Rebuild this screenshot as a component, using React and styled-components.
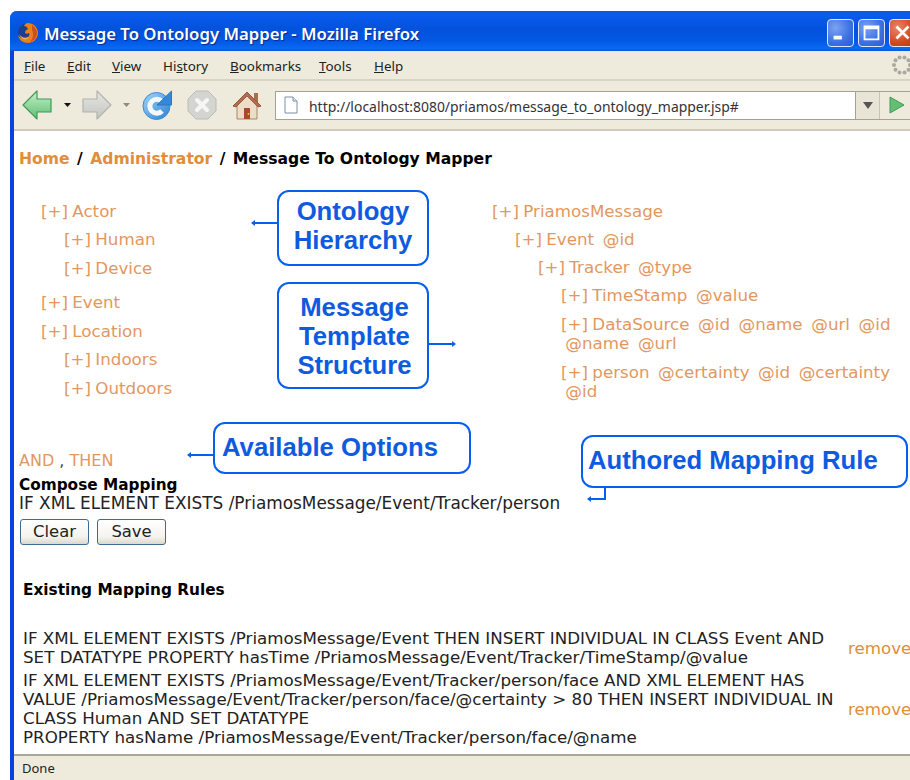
import React from "react";
import styled, { createGlobalStyle } from "styled-components";

const Global = createGlobalStyle`
  html, body { margin: 0; padding: 0; background: #fff; overflow: hidden; }
  #root { width: 910px; height: 780px; overflow: hidden; }
`;

const pageFont = `"DejaVu Sans", Verdana, sans-serif`;
const uiFont = `"Noto Sans", Tahoma, sans-serif`;

const Desktop = styled.div`
  width: 910px;
  height: 780px;
  padding: 11px 0 0 10px;
  box-sizing: border-box;
  overflow: hidden;
`;

const Win = styled.div`
  width: 904px;
  height: 769px;
  display: flex;
  flex-direction: column;
  border-left: 4px solid #0a42e0;
  border-top-left-radius: 7px;
  background: #fff;
  box-sizing: border-box;
  position: relative;
`;

const TitleBar = styled.div`
  height: 40px;
  margin-left: -4px;
  flex: none;
  display: flex;
  align-items: center;
  padding: 3px 0 0 7px;
  box-sizing: border-box;
  gap: 5px;
  border-top-left-radius: 7px;
  background: linear-gradient(180deg, #0a58e0 0%, #0a5cf0 8%, #0352dc 45%, #0358e4 75%, #0a6af4 95%, #0a50d8 100%);
`;

const TitleText = styled.span`
  flex: 1;
  padding-top: 4px;
  font: 600 16.75px/1 ${uiFont};
  color: #fff;
  text-shadow: 1px 1px 1px #0a2a90;
  white-space: nowrap;
`;

const WinButtons = styled.div`
  display: flex;
  gap: 4px;
  margin-right: -2px;
`;

const WinButton = styled.div`
  width: 27px;
  height: 28px;
  border: 1px solid #dfe8fb;
  border-radius: 4px;
  box-sizing: border-box;
  background: ${(p) =>
    p.$close
      ? "radial-gradient(circle at 30% 30%, #e8866a, #d2481f 60%, #bb3612)"
      : "radial-gradient(circle at 30% 30%, #7ba3f2, #3a70e4 60%, #2a5cd2)"};
  display: flex;
  align-items: center;
  justify-content: center;
  flex: none;
`;

const MenuBar = styled.div`
  height: 30px;
  flex: none;
  display: flex;
  align-items: center;
  padding: 4px 0 0 10px;
  background: #eeebdd;
  border-bottom: 2px solid #d8d4c4;
  box-sizing: border-box;
  position: relative;
  font: 13.4px/1 ${uiFont};
  color: #222;
`;

const MenuItem = styled.span`
  width: ${(p) => p.$w}px;
  flex: none;
  white-space: nowrap;
`;

const Throbber = styled.svg`
  position: absolute;
  right: 2px;
  top: 4px;
`;

const Toolbar = styled.div`
  height: 50px;
  flex: none;
  display: flex;
  align-items: center;
  padding-left: 8px;
  background: #eeebdd;
  border-bottom: 2px solid #cfcbbb;
  box-sizing: border-box;
`;

const ToolIcon = styled.svg`
  flex: none;
  margin-left: ${(p) => p.$before || 0}px;
  margin-right: ${(p) => p.$gap || 0}px;
`;

const UrlBar = styled.div`
  flex: none;
  width: 645px;
  height: 29px;
  display: flex;
  align-items: stretch;
  border: 1px solid #a5a195;
  box-sizing: border-box;
  background: #fff;
  margin-left: 13px;
`;

const UrlField = styled.div`
  flex: 1;
  display: flex;
  align-items: center;
  gap: 10px;
  padding-left: 7px;
  font: 13.95px/1 ${uiFont};
  color: #333;
  white-space: nowrap;
  overflow: hidden;
`;

const UrlText = styled.span`
  padding-top: 3px;
`;

const UrlDrop = styled.div`
  width: 23px;
  flex: none;
  display: flex;
  align-items: center;
  justify-content: center;
  background: #e8e5d6;
  border-left: 1px solid #a5a195;
`;

const UrlGo = styled.div`
  width: 40px;
  flex: none;
  display: flex;
  align-items: center;
  padding-left: 9px;
  box-sizing: border-box;
  background: #eeebdd;
  border-left: 1px solid #c8c4b4;
`;

const Content = styled.main`
  flex: 1;
  position: relative;
  padding: 0 0 0 5px;
  font: 16.7px/19px ${pageFont};
  color: #222;
  overflow: hidden;
`;

const Crumbs = styled.div`
  margin-top: 18px;
  height: 20px;
  font: bold 15.6px/20px ${pageFont};
  color: #000;
  white-space: nowrap;
`;

const Trail = styled.span`
  color: #e08e3c;
`;

const Sep = styled.span`
  margin: 0 2px;
`;

const Trees = styled.div`
  display: grid;
  grid-template-columns: 451px 1fr;
  margin-top: 33px;
  height: 228px;
  word-spacing: -1px;
`;

const TreeList = styled.div`
  padding-left: ${(p) => p.$indent}px;
`;

const Node = styled.div`
  color: #e3975e;
  margin-top: ${(p) => p.$top || 0}px;
  padding-left: ${(p) => p.$depth * 23 || 0}px;
  white-space: pre-wrap;
`;

const Options = styled.div`
  margin-top: 21px;
  color: #444;
  height: 25px;
  font-size: 16px;
`;

const Opt = styled.span`
  color: #e3975e;
`;

const Heading = styled.div`
  font-weight: bold;
  font-size: 15.3px;
  line-height: 18px;
  color: #000;
  margin-left: ${(p) => p.$left || 0}px;
`;

const Draft = styled.div`
  font-size: 16.9px;
`;

const Buttons = styled.div`
  display: flex;
  gap: 8px;
  margin-top: 6px;
  margin-left: 1px;
`;

const Btn = styled.button`
  height: 26px;
  width: ${(p) => p.$w}px;
  padding: 0;
  border: 1px solid #3f6b92;
  border-radius: 3px;
  background: linear-gradient(180deg, #fff, #f4f3ee 70%, #dcd8cd);
  font: 16.4px/1 ${pageFont};
  color: #222;
`;

const RuleSection = styled.section`
  margin-top: 36px;
`;

const RuleTable = styled.div`
  margin-top: 30px;
  display: grid;
  grid-template-columns: 825px 1fr;
  row-gap: 4px;
  padding-left: 4px;
  white-space: nowrap;
`;

const Remove = styled.span`
  color: #e08e3c;
  align-self: center;
  padding-top: 1px;
`;

const StatusBar = styled.footer`
  height: 26px;
  flex: none;
  background: #eeebdd;
  border-top: 2px solid #aaa79b;
  box-sizing: border-box;
  padding-left: 8px;
  display: flex;
  align-items: center;
  font: 13px/1 ${uiFont};
  color: #222;
`;

/* Annotation balloons laid over the page */
const Callout = styled.div`
  position: absolute;
  left: ${(p) => p.$x}px;
  top: ${(p) => p.$y}px;
  width: ${(p) => p.$w}px;
  height: ${(p) => p.$h}px;
  border: 2px solid #0560ee;
  border-radius: 12px;
  box-sizing: border-box;
  background: #fff;
  display: flex;
  align-items: center;
  justify-content: ${(p) => (p.$left ? "flex-start" : "center")};
  padding-left: ${(p) => p.$left || p.$nudge || 0}px;
  padding-bottom: ${(p) => p.$lift || 0}px;
  padding-top: ${(p) => p.$drop || 0}px;
  text-align: center;
  font: bold 25.7px/29px "Liberation Sans", Arial, sans-serif;
  color: #0f5be0;
  white-space: pre-line;
`;

const Pointer = styled.svg`
  position: absolute;
  overflow: visible;
  left: ${(p) => p.$x}px;
  top: ${(p) => p.$y}px;
`;

const TREE_LEFT = [
  ["[+] Actor", 0, 0],
  ["[+] Human", 1, 9],
  ["[+] Device", 1, 10],
  ["[+] Event", 0, 15],
  ["[+] Location", 0, 10],
  ["[+] Indoors", 1, 9],
  ["[+] Outdoors", 1, 10],
];

const Firefox = () => (
  <svg width="22" height="22" viewBox="0 0 22 22">
    <circle cx="11" cy="11" r="10" fill="#1c3f8c" />
    <path d="M11 1c5 0 10 4 10 10s-5 10-10 10C6 21 2 18 1 13c2 3 5 4 8 3 3-1 4-3 3-5-1 1-3 1-4 0 0-2 1-3 3-4C10 5 9 4 7 4c1-2 2-3 4-3z" fill="#e8811c" />
    <path d="M15 3c3 2 5 5 5 8 0 4-3 8-7 9 3-3 4-8 2-12z" fill="#c9521a" />
    <path d="M2 12c2 3 6 5 10 3-2 4-8 3-10-3z" fill="#f4b24a" />
  </svg>
);

const NavArrow = styled.svg`
  flex: none;
  transform: ${(p) => (p.$flip ? "scaleX(-1)" : "none")};
`;

const ArrowIcon = ({ flip, fill, stroke, hi }) => (
  <NavArrow width="30" height="30" viewBox="0 0 30 30" $flip={flip}>
    <defs>
      <linearGradient id={`a${hi}`} x1="0" y1="0" x2="0" y2="1">
        <stop offset="0" stopColor={hi} />
        <stop offset="1" stopColor={fill} />
      </linearGradient>
    </defs>
    <path d="M1 15 15 1v8h14v13H15v7z" fill={`url(#a${hi})`} stroke={stroke} strokeWidth="1.2" strokeLinejoin="round" />
  </NavArrow>
);

const LeftTip = ({ x, y }) => (
  <Pointer $x={x} $y={y} width="27" height="8">
    <path d="M27 4H3" stroke="#0560ee" strokeWidth="2" />
    <path d="M0 4l4-3v6z" fill="#0560ee" />
  </Pointer>
);

export default function App() {
  return (
    <Desktop>
      <Global />
      <Win>
        <TitleBar>
          <Firefox />
          <TitleText>Message To Ontology Mapper - Mozilla Firefox</TitleText>
          <WinButtons>
            <WinButton>
              <svg width="27" height="27" viewBox="0 0 27 27"><rect x="6" y="17" width="9" height="4" fill="#fff" /></svg>
            </WinButton>
            <WinButton>
              <svg width="27" height="27" viewBox="0 0 27 27"><path d="M6 7h15v14H6zM6 9h15" fill="none" stroke="#fff" strokeWidth="2" /></svg>
            </WinButton>
            <WinButton $close>
              <svg width="27" height="27" viewBox="0 0 27 27"><path d="M7 7l13 13M20 7 7 20" stroke="#fff" strokeWidth="3" /></svg>
            </WinButton>
          </WinButtons>
        </TitleBar>

        <MenuBar>
          <MenuItem $w={43}><u>F</u>ile</MenuItem>
          <MenuItem $w={45}><u>E</u>dit</MenuItem>
          <MenuItem $w={51}><u>V</u>iew</MenuItem>
          <MenuItem $w={67}>Hi<u>s</u>tory</MenuItem>
          <MenuItem $w={89}><u>B</u>ookmarks</MenuItem>
          <MenuItem $w={55}><u>T</u>ools</MenuItem>
          <MenuItem $w={40}><u>H</u>elp</MenuItem>
          <Throbber width="20" height="20" viewBox="0 0 20 20">
            {Array.from({ length: 10 }).map((_, i) => {
              const a = (i / 10) * Math.PI * 2;
              return <circle key={i} cx={10 + 8 * Math.cos(a)} cy={10 + 8 * Math.sin(a)} r="2" fill="#aaa99f" />;
            })}
          </Throbber>
        </MenuBar>

        <Toolbar>
          <ArrowIcon fill="#5cbf72" hi="#c8f0cc" stroke="#3f9a58" />
          <ToolIcon width="14" height="8" viewBox="0 0 14 8" $before={9} $gap={7}>
            <path d="M3 2h7L6.500 6z" fill="#111" />
          </ToolIcon>
          <ArrowIcon flip fill="#c4c4c0" hi="#e6e6e2" stroke="#b4b4ae" />
          <ToolIcon width="14" height="8" viewBox="0 0 14 8" $before={8} $gap={8}>
            <path d="M3 2h7L6.500 6z" fill="#8a8a86" />
          </ToolIcon>
          <ToolIcon width="30" height="30" viewBox="0 0 30 30" $gap={15}>
            <defs>
              <linearGradient id="reload" x1="0" y1="0" x2="1" y2="1">
                <stop offset="0" stopColor="#a6d6f6" />
                <stop offset="1" stopColor="#2a80d4" />
              </linearGradient>
            </defs>
            <circle cx="14.500" cy="16" r="13.500" fill="url(#reload)" stroke="#3a8ad0" />
            <path d="M20 11.500A7 7 0 1 0 20 21" fill="none" stroke="#f4f8fc" strokeWidth="5" />
            <path d="M29.500 1v14H15z" fill="#3488d8" stroke="#2a78c4" strokeLinejoin="round" />
          </ToolIcon>
          <ToolIcon width="30" height="30" viewBox="0 0 30 30" $gap={15}>
            <path d="M9 1h12l8 8v12l-8 8H9l-8-8V9z" fill="#d4d4d0" stroke="#bcbcb6" />
            <path d="M10 10l10 10M20 10 10 20" stroke="#f6f6f4" strokeWidth="4" strokeLinecap="round" />
          </ToolIcon>
          <ToolIcon width="30" height="30" viewBox="0 0 30 30">
            <path d="M22 3h4v9h-4z" fill="#b06a4c" />
            <path d="M15 2 1 16h4v13h20V16h4z" fill="#ecdcc8" stroke="#a8876a" />
            <path d="M15 2 1 16l3 1L15 6l11 11 3-1z" fill="#b76b4e" stroke="#8c5038" strokeWidth=".8" />
            <path d="M12 18h6v11h-6z" fill="#a8482c" />
            <circle cx="16.500" cy="24" r="1" fill="#f0c040" />
          </ToolIcon>
          <UrlBar>
            <UrlField>
              <svg width="16" height="18" viewBox="0 0 16 18">
                <path d="M2 1h8l4 4v12H2z" fill="#fff" stroke="#7f8ea0" />
                <path d="M10 1v4h4" fill="#dfe6ee" stroke="#7f8ea0" />
              </svg>
              <UrlText>http://localhost:8080/priamos/message_to_ontology_mapper.jsp#</UrlText>
            </UrlField>
            <UrlDrop>
              <svg width="10" height="7" viewBox="0 0 10 7"><path d="M0 0h10L5 7z" fill="#555" /></svg>
            </UrlDrop>
            <UrlGo>
              <svg width="16" height="18" viewBox="0 0 16 18"><path d="M1 1l14 8-14 8z" fill="#62c070" stroke="#3f9a58" /></svg>
            </UrlGo>
          </UrlBar>
        </Toolbar>

        <Content>
          <Crumbs>
            <Trail>Home</Trail> <Sep>/</Sep> <Trail>Administrator</Trail> <Sep>/</Sep> Message To Ontology Mapper
          </Crumbs>

          <Trees>
            <TreeList $indent={22}>
              {TREE_LEFT.map(([label, depth, top]) => (
                <Node key={label} $top={top} $depth={depth}>{label}</Node>
              ))}
            </TreeList>
            <TreeList $indent={22}>
              <Node>[+] PriamosMessage</Node>
              <TreeList $indent={23}>
                <Node $top={9}>[+] Event  @id</Node>
                <TreeList $indent={23}>
                  <Node $top={9}>[+] Tracker  @type</Node>
                  <TreeList $indent={23}>
                    <Node $top={9}>[+] TimeStamp  @value</Node>
                    <Node $top={10}>[+] DataSource  @id  @name  @url  @id<br /> @name  @url</Node>
                    <Node $top={10}>[+] person  @certainty  @id  @certainty<br /> @id</Node>
                  </TreeList>
                </TreeList>
              </TreeList>
            </TreeList>
          </Trees>

          <Options><Opt>AND</Opt> , <Opt>THEN</Opt></Options>
          <Heading>Compose Mapping</Heading>
          <Draft>IF XML ELEMENT EXISTS /PriamosMessage/Event/Tracker/person</Draft>
          <Buttons>
            <Btn $w={69}>Clear</Btn>
            <Btn $w={69}>Save</Btn>
          </Buttons>

          <RuleSection>
            <Heading $left={4}>Existing Mapping Rules</Heading>
            <RuleTable>
              <div>
                IF XML ELEMENT EXISTS /PriamosMessage/Event THEN INSERT INDIVIDUAL IN CLASS Event AND<br />
                SET DATATYPE PROPERTY hasTime /PriamosMessage/Event/Tracker/TimeStamp/@value
              </div>
              <Remove>remove</Remove>
              <div>
                IF XML ELEMENT EXISTS /PriamosMessage/Event/Tracker/person/face AND XML ELEMENT HAS<br />
                VALUE /PriamosMessage/Event/Tracker/person/face/@certainty &gt; 80 THEN INSERT INDIVIDUAL IN<br />
                CLASS Human AND SET DATATYPE<br />
                PROPERTY hasName /PriamosMessage/Event/Tracker/person/face/@name
              </div>
              <Remove>remove</Remove>
            </RuleTable>
          </RuleSection>

          <Callout $x={263} $y={59} $w={152} $h={76} $lift={4}>
            {"Ontology\nHierarchy"}
            <LeftTip x={-28} y={27} />
          </Callout>
          <Callout $x={263} $y={151} $w={152} $h={107} $drop={2} $nudge={3}>
            {"Message\nTemplate\nStructure"}
            <Pointer $x={150} $y={56} width="27" height="8">
              <path d="M0 4h24" stroke="#0560ee" strokeWidth="2" />
              <path d="M27 4l-4-3v6z" fill="#0560ee" />
            </Pointer>
          </Callout>
          <Callout $x={199} $y={291} $w={258} $h={52} $left={7} $lift={2}>
            Available Options
            <LeftTip x={-28} y={27} />
          </Callout>
          <Callout $x={567} $y={304} $w={327} $h={53} $left={5} $lift={2}>
            Authored Mapping Rule
            <Pointer $x={4} $y={49} width="20" height="18">
              <path d="M18 0v13H3" fill="none" stroke="#0560ee" strokeWidth="2" />
              <path d="M0 13l4-3v6z" fill="#0560ee" />
            </Pointer>
          </Callout>
        </Content>

        <StatusBar>Done</StatusBar>
      </Win>
    </Desktop>
  );
}
